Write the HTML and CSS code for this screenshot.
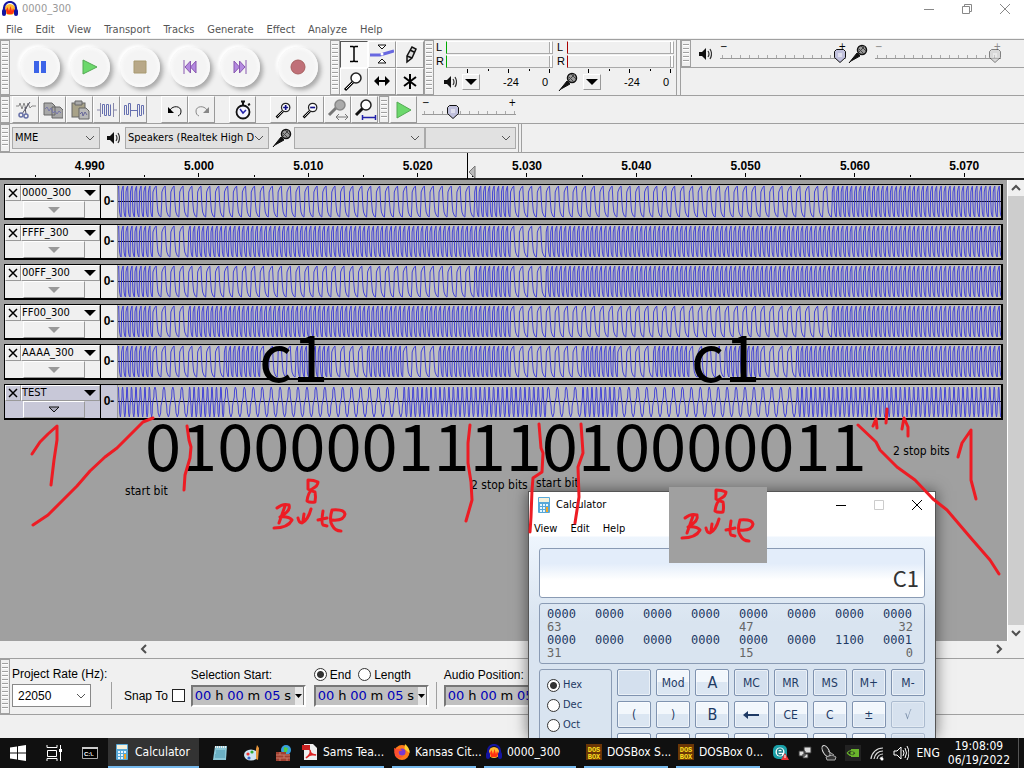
FILE: index.html
```html
<!DOCTYPE html>
<html lang="en">
<head>
<meta charset="utf-8">
<title>0000_300</title>
<link rel="stylesheet" href="styles.css">
</head>
<body>
<svg class="defs" width="0" height="0" aria-hidden="true">
  <symbol id="audacity" viewBox="0 0 16 16"><circle cx="8" cy="8.500" r="5.500" fill="#fb3"/><path d="M4 9l1.500-3 1.500 4 1.500-5 1.500 5 1-3 1.500 3-2 3H5z" fill="#f31"/><path d="M2 10V7a6 6 0 0112 0v3" fill="none" stroke="#1414a0" stroke-width="2.200"/><rect y="8" width="4" height="7" rx="2" fill="#1414a0"/><rect x="12" y="8" width="4" height="7" rx="2" fill="#1414a0"/></symbol>
  <symbol id="speaker" viewBox="0 0 14 14"><path d="M1 5h3l4-4v12L4 9H1z" fill="#111"/><path d="M10 4q2 3 0 6M12 2q3 5 0 10" fill="none" stroke="#333" stroke-width="1.200"/></symbol>
  <symbol id="mic" viewBox="0 0 20 20"><path d="M1 19L9 9l3 3L3 17z" fill="#111" stroke="#111"/><circle cx="14" cy="6" r="4.500" fill="#999" stroke="#111" stroke-width="1.500"/><path d="M11 5l5 5M13 2l5 5M11 8l6-6" stroke="#444"/></symbol>
  <symbol id="lens" viewBox="0 0 24 24"><path d="M3 21l8-8" stroke="#000" stroke-width="3"/><path d="M4 20l7-7" stroke="#eee"/><circle cx="14" cy="9" r="5" fill="#fff" stroke="#222" stroke-width="1.500"/></symbol>
  <symbol id="calcicon" viewBox="0 0 16 16"><rect x="2" width="12" height="16" rx="1" fill="#58a8d8"/><rect x="3" y="1" width="10" height="4" fill="#f5f1dc"/><path d="M4 7h2v2H4zm3 0h2v2H7zm3 0h2v2h-2zM4 10h2v2H4zm3 0h2v2H7zM4 13h2v2H4zm3 0h2v2H7z" fill="#e6f6ff"/><path d="M10 10h2v5h-2z" fill="#f5a623"/></symbol>
  <symbol id="dosbox" viewBox="0 0 16 16"><rect width="16" height="16" fill="#6b3606"/><text x="8" y="7.500">DOS</text><text x="8" y="14.500">BOX</text></symbol>
</svg>

<header class="titlebar">
  <svg class="i16"><use href="#audacity"/></svg><span class="caption">0000_300</span>
  <div class="winbtns">
    <button aria-label="Minimize"><svg class="i12" viewBox="0 0 12 12"><path d="M1 6.500h10"/></svg></button>
    <button aria-label="Restore"><svg class="i12" viewBox="0 0 12 12"><path d="M1.500 3.500h7v7h-7zM3.500 3.500v-2h7v7h-2"/></svg></button>
    <button aria-label="Close"><svg class="i12" viewBox="0 0 12 12"><path d="M1 1l10 10M11 1L1 11"/></svg></button>
  </div>
</header>
<nav class="menubar">
  <button>File</button><button>Edit</button><button>View</button><button>Transport</button><button>Tracks</button><button>Generate</button><button>Effect</button><button>Analyze</button><button>Help</button>
</nav>

<section class="bar bar-main">
  <i class="grip"></i>
  <div class="transport">
    <button class="round" aria-label="Pause"><svg class="i16" viewBox="0 0 16 16"><path d="M2 2h5v12H2zm7 0h5v12H9z" fill="#3c64e8"/></svg></button>
    <button class="round" aria-label="Play"><svg class="i16" viewBox="0 0 16 16"><path d="M1 1l14 7-14 7z" fill="#6cd86c" stroke="#5a5"/></svg></button>
    <button class="round" aria-label="Stop"><svg class="i16" viewBox="0 0 16 16"><path d="M2 2h12v12H2z" fill="#b8a888" stroke="#a89a70"/></svg></button>
    <button class="round" aria-label="Skip to start"><svg class="i16" viewBox="0 0 16 16"><path d="M2 1v14M8.500 2L3 8l5.500 6zM14 2L8.500 8l5.500 6z" fill="#b48ae0" stroke="#8858b0"/></svg></button>
    <button class="round" aria-label="Skip to end"><svg class="i16" viewBox="0 0 16 16"><path d="M14 1v14M7.500 2L13 8l-5.500 6zM2 2l5.500 6L2 14z" fill="#b48ae0" stroke="#8858b0"/></svg></button>
    <button class="round rec" aria-label="Record"><svg class="i16" viewBox="0 0 16 16"><circle cx="8" cy="8" r="7" fill="#c07078" stroke="#a86060"/></svg></button>
  </div>
  <i class="grip"></i>
  <div class="tools">
    <button class="tile on" aria-label="Selection"><svg class="i24" viewBox="0 0 24 24"><path d="M8 4.500h3l1 1 1-1h3M12 5v14M8 19.500h3l1-1 1 1h3" fill="none" stroke="#000" stroke-width="1.500"/></svg></button>
    <button class="tile" aria-label="Envelope"><svg class="i24" viewBox="0 0 24 24"><path d="M0 13h10l7-2 7-2" fill="none" stroke="#6868e0" stroke-width="3"/><path d="M8 3h8l-4 4zM8 21h8l-4-4z" fill="#fff" stroke="#111"/><circle cx="12" cy="12" r="1.500" fill="#fff"/></svg></button>
    <button class="tile" aria-label="Draw"><svg class="i24" viewBox="0 0 24 24"><path d="M9 20v-6l5-9 4 2-4 9zM9 14l5 2M12 8l4 2" fill="#ddd" stroke="#111" stroke-width="1.500"/></svg></button>
    <button class="tile" aria-label="Zoom"><svg class="i24"><use href="#lens"/></svg></button>
    <button class="tile" aria-label="Time shift"><svg class="i24" viewBox="0 0 24 24"><path d="M6 12h12" stroke="#000" stroke-width="2"/><path d="M9 7v10l-5-5zM15 7v10l5-5z"/></svg></button>
    <button class="tile" aria-label="Multi-tool"><svg class="i24" viewBox="0 0 24 24"><path d="M12 5v15M6 8l12 9M18 8L6 17" stroke="#000" stroke-width="2"/></svg></button>
  </div>
  <i class="grip"></i>
  <div class="meters">
    <div class="meter">
      <div class="lr"><span>L</span><i class="lane green"></i><span>R</span><i class="lane green"></i></div>
      <div class="ticks"><i></i><i></i><i></i><i></i><i></i></div>
      <div class="scale"><svg class="i14"><use href="#speaker"/></svg><button class="drop" aria-label="Output meter"><svg class="i12" viewBox="0 0 12 12"><path d="M0 3h12L6 9z"/></svg></button><span>-24</span><span>0</span></div>
    </div>
    <div class="meter">
      <div class="lr"><span>L</span><i class="lane red"></i><span>R</span><i class="lane red"></i></div>
      <div class="ticks"><i></i><i></i><i></i><i></i><i></i></div>
      <div class="scale"><svg class="i20"><use href="#mic"/></svg><button class="drop" aria-label="Input meter"><svg class="i12" viewBox="0 0 12 12"><path d="M0 3h12L6 9z"/></svg></button><span>-24</span><span>0</span></div>
    </div>
  </div>
  <div class="mixer-col">
    <div class="mixer">
      <i class="grip"></i>
      <svg class="i14"><use href="#speaker"/></svg>
      <label class="sl wide"><span>−</span><span>+</span><input type="range" min="0" max="10" value="10" aria-label="Output volume"></label>
      <svg class="i20"><use href="#mic"/></svg>
      <label class="sl wide off"><span>−</span><span>+</span><input type="range" min="0" max="10" value="10" disabled aria-label="Input volume"></label>
    </div>
  </div>
</section>

<section class="bar bar-edit">
  <i class="grip"></i>
  <div class="group">
    <button class="tile" aria-label="Cut"><svg class="i20" viewBox="0 0 20 20"><path d="M0 6h3l1-3 2 6 2-6 2 6 2-6 2 5 2-2h4" fill="none" stroke="#888"/><path d="M14 2L6 14M9 7l1 7" stroke="#556"/><circle cx="5" cy="15" r="2" fill="none" stroke="#6670a8" stroke-width="1.500"/><circle cx="10" cy="16" r="2" fill="none" stroke="#6670a8" stroke-width="1.500"/></svg></button>
    <button class="tile" aria-label="Copy"><svg class="i20" viewBox="0 0 20 20"><path d="M1 3h8l3 3v9H1zM9 7h8l3 3v8H9z" fill="#a8a8a8" stroke="#666"/><path d="M2 9l2-2 2 4 2-3 2 5 2-2 2 3 2-3 2 2" fill="none" stroke="#77a"/></svg></button>
    <button class="tile" aria-label="Paste"><svg class="i20" viewBox="0 0 20 20"><rect x="2" y="3" width="13" height="14" fill="#a8a288" stroke="#666"/><path d="M5 1h7v4H5z" fill="#aaa" stroke="#666"/><path d="M9 8h7l3 3v8H9z" fill="#b8b8b8" stroke="#666"/><path d="M10 14l2-2 1 4 2-4 2 3" fill="none" stroke="#669"/></svg></button>
    <button class="tile" aria-label="Trim"><svg class="i20" viewBox="0 0 20 20"><path d="M0 10h4M16 10h4M3.500 3v14M16.500 3v14" stroke="#88a"/><path d="M5.500 14V4.500h2v11h2v-11h2v11h2v-11" fill="none" stroke="#6670b0"/></svg></button>
    <button class="tile" aria-label="Silence"><svg class="i20" viewBox="0 0 20 20"><path d="M.5 15V5.500h2v9h2v-11h2v13M7 10.500h7M13.500 17V4.500h2v11h2v-10h2v9" fill="none" stroke="#6670b0"/></svg></button>
  </div>
  <div class="group">
    <button class="tile" aria-label="Undo"><svg class="i20" viewBox="0 0 20 20"><path d="M5 10c3-5 11-4 11 1 0 3-1 4-3 5" fill="none" stroke="#111"/><path d="M3 7v6h6z"/></svg></button>
    <button class="tile" aria-label="Redo"><svg class="i20" viewBox="0 0 20 20"><path d="M15 10c-3-5-11-4-11 1 0 3 1 4 3 5" fill="none" stroke="#888"/><path d="M17 7v6h-6z" fill="#888"/></svg></button>
  </div>
  <div class="group">
    <button class="tile" aria-label="Sync lock"><svg class="i20" viewBox="0 0 20 20"><circle cx="10" cy="12" r="6.500" fill="#f4f4ff" stroke="#111" stroke-width="1.800"/><path d="M8 1.500h4M10 2v4M15 5l2-1" stroke="#111" stroke-width="2"/><path d="M7 9l3 4 3-3" fill="none" stroke="#22a" stroke-width="1.500"/></svg></button>
  </div>
  <div class="group">
    <button class="tile" aria-label="Zoom in"><svg class="i20" viewBox="0 0 24 24"><use href="#lens" width="24" height="24"/><path d="M11 9h6M14 6v6" stroke="#118" stroke-width="2"/></svg></button>
    <button class="tile" aria-label="Zoom out"><svg class="i20" viewBox="0 0 24 24"><use href="#lens" width="24" height="24"/><path d="M11 9h6" stroke="#118" stroke-width="2"/></svg></button>
    <button class="tile" aria-label="Fit selection"><svg class="i24" viewBox="0 0 24 24"><path d="M3 17l8-8" stroke="#777" stroke-width="3"/><circle cx="14" cy="7" r="5" fill="#aaa" stroke="#888" stroke-width="1.500"/><path d="M10 19h12M13 16l-3 3 3 3M19 16l3 3-3 3" fill="none" stroke="#777"/></svg></button>
    <button class="tile" aria-label="Fit project"><svg class="i24" viewBox="0 0 24 24"><path d="M3 17l8-8" stroke="#111" stroke-width="3"/><circle cx="13" cy="7" r="5" fill="#fff" stroke="#222" stroke-width="1.500"/><path d="M10 19.500h12M9.500 17v5M22.500 17v5" stroke="#22a" stroke-width="1.500"/></svg></button>
  </div>
  <i class="grip"></i>
  <button class="tile" aria-label="Play at speed"><svg class="i20" viewBox="0 0 20 20"><path d="M3 2l14 8-14 8z" fill="#6cd86c" stroke="#5a5"/></svg></button>
  <label class="sl"><span>−</span><span>+</span><input type="range" min="0" max="10" value="3" aria-label="Playback speed"></label>
</section>

<section class="bar bar-device">
  <i class="grip"></i>
  <select class="host" aria-label="Audio host"><option>MME</option></select>
  <svg class="i14"><use href="#speaker"/></svg>
  <select class="out" aria-label="Output device"><option>Speakers (Realtek High D</option></select>
  <svg class="i20"><use href="#mic"/></svg>
  <div class="pair"><select class="in" aria-label="Input device"><option></option></select><select class="chan" aria-label="Input channels"><option></option></select></div>
  <i class="endline"></i>
</section>

<div class="ruler">
  <span>4.990</span><span>5.000</span><span>5.010</span><span>5.020</span><span>5.030</span><span>5.040</span><span>5.050</span><span>5.060</span><span>5.070</span>
  <svg class="playhead" viewBox="0 0 10 28"><path d="M.5 0v26" stroke="#000"/><path d="M8 13v12l-6-6z" fill="#bbb" stroke="#777"/></svg>
</div>

<main class="work">
  <div class="tracks" id="tracks"></div>
  <div class="vscroll"><button aria-label="Scroll up"><svg class="i12" viewBox="0 0 12 12"><path d="M2 8l4-4 4 4"/></svg></button><i></i><button aria-label="Scroll down"><svg class="i12" viewBox="0 0 12 12"><path d="M2 4l4 4 4-4"/></svg></button></div>
</main>
<div class="hscroll"><button aria-label="Scroll left"><svg class="i12" viewBox="0 0 12 12"><path d="M8 2L4 6l4 4"/></svg></button><button aria-label="Scroll right"><svg class="i12" viewBox="0 0 12 12"><path d="M4 2l4 4-4 4"/></svg></button></div>

<section class="selection">
  <i class="grip"></i>
  <div class="col"><label for="rate">Project Rate (Hz):</label><select id="rate"><option>22050</option></select></div>
  <i class="sep"></i>
  <label class="snap">Snap To <input type="checkbox"></label>
  <div class="col"><span>Selection Start:</span><div class="time"><b>00</b>h<b>00</b>m<b>05</b>s<button aria-label="Start format"><svg viewBox="0 0 7 4"><path d="M0 0h7L3.500 4z"/></svg></button></div></div>
  <div class="col"><div class="radios"><label><input type="radio" name="len" checked>End</label><label><input type="radio" name="len">Length</label></div><div class="time"><b>00</b>h<b>00</b>m<b>05</b>s<button aria-label="End format"><svg viewBox="0 0 7 4"><path d="M0 0h7L3.500 4z"/></svg></button></div></div>
  <i class="sep near"></i>
  <div class="col"><span>Audio Position:</span><div class="time"><b>00</b>h<b>00</b>m<b>05</b>s<button aria-label="Position format"><svg viewBox="0 0 7 4"><path d="M0 0h7L3.500 4z"/></svg></button></div></div>
</section>
<div class="status"></div>

<footer class="taskbar">
  <button class="sys" aria-label="Start"><svg class="i16" viewBox="0 0 16 16"><path d="M0 2.500l7-1v6H0zM8 1.300L16 0v7.500H8zM0 8.500h7v6l-7-1zM8 8.500h8V16l-8-1.300z" fill="#fff"/></svg></button>
  <button class="sys" aria-label="Task View"><svg class="i16" viewBox="0 0 16 16"><path d="M1 0v2.500h10V0M1.500 5.500h9v6h-9zM1 16v-2.500h10V16M14.500 0v16" fill="none" stroke="#fff"/><path d="M13 4h3v3h-3z" fill="#fff"/></svg></button>
  <button class="sys" aria-label="Command Prompt"><svg class="i16" viewBox="0 0 16 16"><path d="M.5 2.500h15v11H.5z" fill="#000" stroke="#aaa"/><path d="M0 2h16v2H0z" fill="#ccc"/><text class="cmd" x="2" y="11">C:\.</text></svg></button>
  <button class="app active"><svg class="i16"><use href="#calcicon"/></svg><span>Calculator</span></button>
  <button class="sys" aria-label="Notepad"><svg class="i16" viewBox="0 0 16 16"><path d="M3 1h12l-1 14H1z" fill="#8cc8d8"/><path d="M3 2h12" stroke="#eee" stroke-width="2" stroke-dasharray="1 1"/><path d="M4 6h9M4 8h9M3 10h10M3 12h10" stroke="#4a98b0"/></svg></button>
  <button class="sys" aria-label="Paint"><svg class="i16" viewBox="0 0 16 16"><ellipse cx="7" cy="10" rx="7" ry="5.500" fill="#cde4f4"/><circle cx="4" cy="9" r="1.600" fill="#e33"/><circle cx="8" cy="7" r="1.600" fill="#3a3"/><circle cx="5" cy="13" r="1.600" fill="#36c"/><path d="M13 0l2 3-1 12-2-1V4z" fill="#e8963c"/></svg></button>
  <button class="sys" aria-label="Firewall"><svg class="i16" viewBox="0 0 16 16"><circle cx="10" cy="5" r="5" fill="#38a0e0"/><path d="M8 2l4 1-1 4-3 1z" fill="#5c4"/><path d="M0 7h10v2h4v7H0z" fill="#a04030"/><path d="M0 10h14M0 13h14M4 7v3M8 10v3M4 13v3M11 13v3" stroke="#c87868"/></svg></button>
  <button class="app run"><svg class="i16" viewBox="0 0 16 16"><path d="M2 0h9l4 4v12H2z" fill="#eee"/><path d="M0 1h8v5H0z" fill="#c22"/><path d="M4 14c4-3 5-6 4-8 0 4 3 5 6 5-3-1-7 0-10 3z" fill="none" stroke="#d22" stroke-width="1.500"/></svg><span>Sams Tea...</span></button>
  <button class="app run"><svg class="i16" viewBox="0 0 16 16"><circle cx="8" cy="8.500" r="7.500" fill="#ff7a18"/><path d="M11 0q5 4 4.500 9l-5-4z" fill="#ffd030"/><circle cx="8" cy="8" r="3.500" fill="#7a3ad0"/><path d="M0 4l3 1q4-1 5 2-3-1-4 2 1 4 6 3-5 4-9 0z" fill="#ff4f30"/></svg><span>Kansas Cit...</span></button>
  <button class="app run long"><svg class="i16"><use href="#audacity"/></svg><span>0000_300</span></button>
  <button class="app run"><svg class="i16 dos"><use href="#dosbox"/></svg><span>DOSBox S...</span></button>
  <button class="app run"><svg class="i16 dos"><use href="#dosbox"/></svg><span>DOSBox 0...</span></button>
  <div class="tray">
    <svg class="i16" viewBox="0 0 16 16"><rect width="14" height="14" rx="5" fill="#19a0a8"/><circle cx="7" cy="7" r="4.500" fill="#fff"/><path d="M4.500 7h5q0-3-2.500-3T4.500 7t2.500 3l2-.500" fill="none" stroke="#19808a" stroke-width="1.300"/><path d="M12 8l4 7H8z" fill="#e33"/><path d="M12 10v3" stroke="#fff"/></svg>
    <svg class="i16" viewBox="0 0 16 16"><path d="M7 2h7v6H7zM2 6h6v5H2zM6 9h5v4H6z" fill="#ddd" stroke="#333"/></svg>
    <svg class="i16" viewBox="0 0 16 16"><ellipse cx="5" cy="6" rx="3" ry="6" transform="rotate(-30 5 6)" fill="#222" stroke="#ddd"/><path d="M5 12l6-2 4 2-1 3H6zM7 6l6 4" fill="#333" stroke="#aaa"/></svg>
    <svg class="i16" viewBox="0 0 16 16"><path d="M0 0h16v16H0z" fill="#222"/><path d="M6 4h8v8H6z" fill="#6ab52c"/><path d="M2 8q4-5 9 0-4 5-9 0" fill="#222" stroke="#6ab52c" stroke-width="1.200"/><circle cx="7" cy="8" r="1.700" fill="#6ab52c"/></svg>
    <svg class="i16 wifi" viewBox="0 0 16 16"><path d="M2 14A12 12 0 0114 3M5 14a9 9 0 019-8M8 14a6 6 0 016-5M11 14a3 3 0 013-2" fill="none" stroke="#ddd" stroke-width="1.200"/><circle cx="13" cy="14" r="1.500" fill="#fff"/></svg>
    <svg class="i16" viewBox="0 0 16 16"><path d="M1 6h3l4-4v12l-4-4H1zM10 5q2 3 0 6M12 3q3 5 0 10M14 1q4 7 0 14" fill="none" stroke="#fff"/></svg>
    <span class="lang">ENG</span>
    <div class="clock"><span>19:08:09</span><span>06/19/2022</span></div>
    <i class="peek"></i>
  </div>
</footer>

<section class="calc" aria-label="Calculator">
  <header><svg class="i16"><use href="#calcicon"/></svg><span>Calculator</span>
    <div class="winbtns dark">
      <button aria-label="Minimize calculator"><svg class="i12" viewBox="0 0 12 12"><path d="M1 6.500h10"/></svg></button>
      <button aria-label="Maximize calculator" disabled><svg class="i12" viewBox="0 0 12 12"><path d="M1.500 1.500h9v9h-9z"/></svg></button>
      <button aria-label="Close calculator"><svg class="i12" viewBox="0 0 12 12"><path d="M1 1l10 10M11 1L1 11"/></svg></button>
    </div>
  </header>
  <nav><button>View</button><button>Edit</button><button>Help</button></nav>
  <div class="calc-body">
    <output class="display">C1</output>
    <div class="bits">
      <span>0000</span><span>0000</span><span>0000</span><span>0000</span><span>0000</span><span>0000</span><span>0000</span><span>0000</span>
      <small>63</small><small></small><small></small><small></small><small>47</small><small></small><small></small><small class="r">32</small>
      <span>0000</span><span>0000</span><span>0000</span><span>0000</span><span>0000</span><span>0000</span><span>1100</span><span>0001</span>
      <small>31</small><small></small><small></small><small></small><small>15</small><small></small><small></small><small class="r">0</small>
    </div>
    <div class="pad">
      <div class="base"><label><input type="radio" name="base" checked>Hex</label><label><input type="radio" name="base">Dec</label><label><input type="radio" name="base">Oct</label></div>
      <div class="keys">
        <button class="flat" aria-label="Blank"></button><button>Mod</button><button class="hex">A</button><button class="flat">MC</button><button class="flat">MR</button><button class="flat">MS</button><button class="flat">M+</button><button class="flat">M-</button>
        <button>(</button><button>)</button><button class="hex">B</button><button aria-label="Backspace"><svg class="i16" viewBox="0 0 16 16"><path d="M2 8h14" stroke="#1e3a64" stroke-width="2"/><path d="M0 8l5-4v8z" fill="#1e3a64"/></svg></button><button>CE</button><button>C</button><button>±</button><button class="flat" disabled>√</button>
        <button aria-label="RoL"></button><button aria-label="RoR"></button><button aria-label="C digit"></button><button aria-label="7"></button><button aria-label="8"></button><button aria-label="9"></button><button aria-label="Divide"></button><button class="flat" disabled aria-label="Percent"></button>
      </div>
    </div>
  </div>
</section>

<svg class="notes" viewBox="0 0 1024 768">
  <path d="M669 487h98v76h-98z" fill="#a0a0a0"/>
  <text class="big" x="259" y="382">c1</text>
  <text class="big" x="691" y="382">c1</text>
  <text class="big" x="145" y="471">01000001111010000011</text>
  <text x="125" y="495">start bit</text>
  <text x="471" y="489">2 stop bits</text>
  <text x="536" y="487">start bit</text>
  <text x="893" y="455">2 stop bits</text>
  <g class="ink">
    <path d="M32 454l8-12 8-8 9-8v14l-3 20-3 25"/>
    <path d="M153 418l-10 4-13 13-13 13-12 9-15 14-13 15-15 15-14 14-15 10"/>
    <path d="M187 426l2 14 2 7-1 11-5 17-1 15"/>
    <path d="M470 425l-2 18v20l3 19 1 18-6 21"/>
    <path d="M539 424l2 24 2 5-1 19-9 6-1 12-1 27-1 15"/>
    <path d="M581 424l2 29-5 14 1 30-4 26"/>
    <path d="M858 425l18 17 4 8 17 17 18 13 18 19 14 11 23 27 20 23 9 14"/>
    <path d="M873 426l3-7 1 9M887 409l-1 14M902 429l2-11 4 9v9"/>
    <path d="M958 457l4-14 9-13v50l5 19"/>
    <g id="byte">
      <path d="M308 480q6 0 10 2 0 4-6 7-4 4-5 12 3 2 8 1 1-5 0-10-4-1-7-3v-9"/>
      <path d="M285 506l-6 17M277 508q6-5 12-3 2 6-9 12 9-1 12 3-4 8-18 8"/>
      <path d="M298 518q1 5 4 5 6-3 9-14M304 514l-1 7"/>
      <path d="M323 511q-2 12 0 14l4 1M318 520l9-2"/>
      <path d="M332 520q12 1 13-6-1-5-13-4-3 10 0 15 3 6 9 6"/>
    </g>
    <use href="#byte" x="408" y="10"/>
  </g>
</svg>
<script src="tracks.js"></script>
</body>
</html>
```
FILE: styles.css
```css
* { box-sizing: border-box; }
html, body { margin: 0; height: 100%; }
body { display: flex; flex-direction: column; min-height: 100vh; position: relative; overflow: hidden; background: #f0f0f0; color: #000; font: 11px/14px "DejaVu Sans Condensed", "DejaVu Sans", sans-serif; }
button, select, input { font: inherit; color: inherit; margin: 0; padding: 0; }
button { border: 0; background: none; display: inline-flex; align-items: center; justify-content: center; }
svg { display: block; flex: none; }
.defs { position: absolute; }
.i12 { width: 12px; height: 12px; }
.i14 { width: 14px; height: 14px; }
.i16 { width: 16px; height: 16px; }
.i20 { width: 20px; height: 20px; }
.i24 { width: 24px; height: 24px; }

.titlebar { display: flex; align-items: center; height: 18px; padding-left: 2px; gap: 4px; background: #fff; color: #999; font-size: 11px; }
.winbtns { display: flex; gap: 26px; margin-left: auto; padding-right: 13px; }
.winbtns path { fill: none; stroke: #888; }
.dark path { stroke: #000; }
.dark :disabled path { stroke: #ccc; }
.menubar { display: flex; gap: 13px; height: 20px; padding: 4px 6px 0; background: #fff; color: #555; }

.bar { display: flex; align-items: center; border-top: 1px solid #a0a0a0; }
.grip { align-self: stretch; width: 10px; border: 3px solid #f0f0f0; border-width: 4px 2px; outline: 1px solid #a0a0a0; outline-offset: -1px; background: repeating-linear-gradient(#a0a0a0 0 1px, #fff 1px 2px, #f0f0f0 2px 4px); flex: none; }
.bar-main { height: 56px; margin-top: 1px; }
.transport { display: flex; gap: 10px; width: 320px; padding: 0 0 2px 10px; }
.round { width: 40px; height: 40px; border-radius: 50%; background: radial-gradient(#f4f4f4 55%, #fff 85%, #eee); box-shadow: 3px 3px 4px #aaa, -2px -2px 3px #fff; }
.rec { margin-left: 8px; }
.tools { display: grid; grid-template-columns: repeat(3, 28px); grid-template-rows: repeat(2, 27px); }
.tile { border: 1px solid; border-color: #fff #999 #999 #fff; height: 27px; min-width: 27px; overflow: hidden; }
.on { border-color: #555 #fff #fff #555; background: #f8f8f8; }
.meters { display: flex; width: 243px; height: 55px; padding: 0 2px; gap: 4px; border-right: 1px solid #a0a0a0; }
.meter { flex: 1; display: flex; flex-direction: column; min-width: 0; }
.lr { display: grid; grid-template-columns: 10px 1fr; align-items: center; font-family: "Liberation Sans", sans-serif; }
.lane { height: 13px; border: 1px solid #aaa; border-left: 1px solid; border-top-color: #fff; box-shadow: inset -2px 0 #fff, inset -3px 0 #aaa; }
.green { border-left-color: #0a0; }
.red { border-left-color: #a00; }
.ticks { display: flex; justify-content: space-between; margin: 1px 3px 0 31px; height: 4px; }
.ticks i { width: 1px; height: 2px; background: #000; }
.ticks i:nth-child(odd) { height: 4px; }
.scale { display: flex; align-items: center; height: 17px; font-family: "Liberation Sans", sans-serif; padding: 0 5px 0 7px; }
.scale .i20 { margin-left: -6px; }
.scale span { margin-left: auto; }
.drop { width: 18px; height: 16px; margin-left: 5px; border: 1px solid; border-color: #fff #999 #999 #fff; flex: none; }
.mixer-col { flex: 1; align-self: stretch; margin-left: 3px; border-left: 1px solid #a0a0a0; }
.mixer { display: flex; align-items: center; height: 28px; border-bottom: 1px solid #a0a0a0; }
.mixer .grip { margin-right: 7px; }
.sl { display: grid; grid-template-columns: 1fr auto; width: 94px; margin-left: 5px; line-height: 6px; font-size: 10px; padding-bottom: 2px; }
.sl input { grid-column: 1 / 3; appearance: none; width: 100%; height: 12px; background: repeating-linear-gradient(90deg, #aaa 0 1px, transparent 1px 9px) 2px 5px / 100% 3px no-repeat, linear-gradient(#999, #999) 0 8px / 100% 1px no-repeat; }
.wide { width: 126px; margin-left: 8px; }
.wide + .i20 { margin-left: 2px; }
.i20 + .wide { margin-left: 7px; }
.off { color: #888; }
input[type=range]::-webkit-slider-thumb { appearance: none; width: 12px; height: 14px; background: url("data:image/svg+xml,%3Csvg xmlns='http://www.w3.org/2000/svg' width='12' height='14'%3E%3Cpath d='M2.500 .5h7l2 2v6l-5.500 5-5.500-5v-6z' fill='%23c0c0dc' stroke='%23111'/%3E%3Cpath d='M4 5h4M4 7h4' stroke='%23fff'/%3E%3C/svg%3E"); }
.off input::-webkit-slider-thumb { filter: grayscale(1) opacity(.5); }

.bar-edit { height: 28px; }
.group { display: flex; margin-right: 12px; padding-left: 2px; }
.group + .grip { margin-left: -11px; margin-right: 1px; }
.bar-device { height: 29px; }
select { appearance: none; height: 22px; border: 1px solid #aaa; border-radius: 0; background: #e1e1e1 url("data:image/svg+xml,%3Csvg xmlns='http://www.w3.org/2000/svg' width='10' height='6'%3E%3Cpath d='M1 1l4 4 4-4' fill='none' stroke='%23555'/%3E%3C/svg%3E") right 4px center no-repeat; padding: 0 14px 0 2px; }
.host { width: 88px; margin: 0 6px 0 2px; }
.out { width: 144px; margin: 0 3px 0 5px; }
.pair { display: flex; margin-left: 2px; }
.in { width: 131px; }
.chan { width: 91px; }
.endline { align-self: stretch; width: 4px; margin-left: 2px; border: 1px solid #a0a0a0; border-width: 0 1px; }

.ruler { position: relative; display: flex; height: 28px; padding: 0 5px 0 35px; border-top: 1px solid #a0a0a0; border-bottom: 2px solid #222; font: bold 12px/26px "Liberation Sans", sans-serif; text-align: center; }
.ruler span { flex: 1; background: linear-gradient(#000, #000) center bottom 1px / 1px 4px no-repeat, linear-gradient(#000, #000) left bottom 1px / 1px 2px no-repeat; }
.playhead { position: absolute; left: 467px; top: 0; width: 10px; height: 28px; }

.work { flex: 1; display: flex; min-height: 0; background: #a0a0a0; }
.tracks { flex: 1; display: flex; flex-direction: column; gap: 4px; padding: 4px 4px 0; min-width: 0; }
.track { display: flex; height: 36px; border: 1px solid #000; border-right-width: 2px; border-bottom-width: 2px; background: #f0f0f0; flex: none; }
.selected { background: #c8c8d8; }
.head { width: 96px; display: grid; grid-template: 16px 1fr / 16px 1fr; border-right: 1px solid #000; }
.head button { border: 1px solid; border-color: #fff #999 #999 #fff; min-width: 0; }
.head .name { justify-content: space-between; padding: 0 3px 0 0; }
.head .fold { grid-column: 1 / 3; width: 62px; justify-self: start; margin-left: 18px; }
.zero { width: 17px; border-right: 1px solid #999; font: bold 12px/33px "Liberation Sans", sans-serif; text-align: center; }
.wave { flex: 1; min-width: 0; height: 33px; background: #c0c0c0; }
.wave path { fill: none; stroke: #4444d6; stroke-width: 1; }
.wave .mid { stroke: #000; }

.vscroll { width: 17px; display: flex; flex-direction: column; background: #f0f0f0; border-left: 1px solid #fff; }
.vscroll i { flex: 1; background: #cdcdcd; }
.vscroll button, .hscroll button { height: 16px; }
.vscroll path, .hscroll path { fill: none; stroke: #505050; stroke-width: 2; }
.hscroll { display: flex; justify-content: space-between; height: 17px; padding: 0 19px 0 138px; }

.selection { display: flex; align-items: center; height: 57px; border: 1px solid #a0a0a0; border-width: 1px 0; font: 12px/16px "Liberation Sans", sans-serif; white-space: nowrap; }
.col { display: flex; flex-direction: column; gap: 2px; width: 115px; margin-right: 8px; }
.selection .grip + .col { width: 98px; margin: 0 1px 0 2px; }
#rate { width: 79px; height: 23px; background-color: #fff; border-color: #888; padding-left: 5px; }
.sep { width: 1px; height: 27px; background: #a0a0a0; margin: 18px 12px 0 0; }
.near { margin: 18px 7px 0 -1px; }
.snap { display: flex; align-items: center; gap: 4px; margin: 18px 6px 0 0; }
.snap input { appearance: none; width: 13px; height: 13px; border: 1px solid #222; background: #fff; }
.radios { display: flex; gap: 7px; }
.radios label, .base label { display: flex; align-items: center; gap: 3px; }
input[type=radio] { appearance: none; width: 13px; height: 13px; border: 1px solid #333; border-radius: 50%; background: #fff; }
input[type=radio]:checked { background: radial-gradient(#333 0 3px, #fff 4px); }
.time { display: flex; align-items: center; justify-content: space-between; width: 115px; height: 22px; padding-left: 2px; background: #c0c0c0; border: 2px solid; border-color: #777 #fff #fff #777; font: 13px/16px "DejaVu Sans", sans-serif; }
.time b { font-weight: normal; color: #0000b8; }
.time button { width: 9px; height: 18px; background: #e8e8e8; border-right: 1px solid #777; }
.time svg { width: 7px; height: 4px; }
.status { height: 23px; }

.taskbar { position: relative; z-index: 2; display: flex; height: 30px; background: #101010; color: #fff; font-size: 12px; }
.sys { width: 32px; height: 30px; flex: none; }
.sys:nth-child(-n+3) { width: 36px; }
.app { display: flex; justify-content: flex-start; gap: 5px; width: 84px; margin-right: 8px; padding-left: 2px; border-bottom: 2px solid #76b9ed; white-space: nowrap; flex: none; }
.active { width: 91px; background: #333; padding-left: 6px; margin-right: 5px; }
.long { width: 92px; }
.tray { display: flex; align-items: center; gap: 8px; margin-left: auto; }
.clock { display: flex; flex-direction: column; align-items: center; line-height: 14px; }
.peek { height: 30px; width: 6px; border-left: 1px solid #555; }
#dosbox text { font: bold 7px/7px "Liberation Mono", monospace; text-anchor: middle; fill: #ffe020; }
.cmd { font: bold 6px/6px "Liberation Sans", sans-serif; fill: #fff; }

.calc { position: absolute; z-index: 1; left: 528px; top: 491px; width: 408px; height: 247px; overflow: hidden; border: 1px solid #555; border-bottom: 0; background: linear-gradient(#fff 44px, #eef5fd 45px, #d9e4f0 130px); box-shadow: 0 0 14px #0008; }
.calc header { display: flex; align-items: center; height: 25px; padding-left: 7px; gap: 4px; }
.calc header .winbtns { padding-right: 12px; }
.calc nav { display: flex; gap: 13px; height: 20px; padding: 4px 5px 0; }
.calc-body { padding: 11px 10px 0; display: flex; flex-direction: column; gap: 5px; color: #1e3a64; }
.display { height: 50px; padding: 17px 5px 0; border: 1px solid #8a9bb4; border-radius: 3px; background: linear-gradient(#e3edfa 30%, #fff 65%); text-align: right; font: 22px/22px "Noto Sans CJK SC", sans-serif; color: #333; }
.bits { display: grid; grid-template-columns: repeat(7, 48px) 30px; justify-content: start; height: 61px; padding: 4px 7px; border: 1px solid #8a9bb4; border-radius: 3px; font: 12px/13px "DejaVu Sans Mono", monospace; }
.bits small { font-size: 12px; color: #666; }
.bits .r { text-align: right; }
.pad { display: grid; grid-template-columns: 73px 1fr; gap: 5px; }
.base { display: flex; flex-direction: column; gap: 6px; height: 100px; padding: 8px 7px; border: 1px solid #8a9bb4; border-radius: 3px; }
.keys { display: grid; grid-template-columns: repeat(8, 1fr); gap: 5px; align-content: start; }
.keys button { height: 27px; border: 1px solid #7f93b0; border-radius: 2px; background: linear-gradient(#f2f7fc 50%, #dbe6f2 50%); box-shadow: inset 0 0 0 1px #fff8; font-size: 12px; }
.keys .hex { font-size: 16px; }
.keys .flat { background: #d4e0ee; }
.keys :disabled { opacity: .5; }

.notes { position: absolute; z-index: 3; left: 0; top: 0; width: 1024px; height: 768px; pointer-events: none; }
.notes text { font: 12px "DejaVu Sans Condensed", sans-serif; }
.notes .big { font: 65px "Noto Sans CJK SC", sans-serif; }
.ink { fill: none; stroke: #ed1c24; stroke-width: 3; stroke-linecap: round; stroke-linejoin: round; }
```
FILE: tracks.js
```js
// Each string holds one character per 300-baud bit: a 0 is four slow cycles, a 1 is eight fast ones.
const tracks = [
  ["0000_300", "1" + "0".repeat(9) + "1" + "0".repeat(9) + "11111"],
  ["FFFF_300", "10" + "1".repeat(9) + "0" + "1".repeat(13)],
  ["00FF_300", "1" + "0".repeat(9) + "10" + "1".repeat(13)],
  ["FF00_300", "10" + "1".repeat(9) + "0".repeat(9) + "11111"],
  ["AAAA_300", "1001010101100101010111111"],
  ["TEST", "1010000011110100000111111"]
];
const BIT = 35.8, FIRST = -1;

function wave(bits, symmetric) {
  let d = "M0 17";
  [...bits].forEach((b, i) => {
    const n = b === "1" ? 8 : 4, w = BIT / n;
    for (let k = 0; k < n; k++) {
      const x = FIRST + i * BIT + k * w;
      const pts = symmetric
        ? [[0, 17], [.12, 12], [.15, 5], [.25, 2], [.35, 5], [.4, 12], [.55, 21], [.6, 28], [.75, 32], [.88, 28], [.92, 21]]
        : [[0, 17], [.02, 7], [.2, 3], [.38, 1], [.45, 12], [.5, 20], [.58, 27], [.75, 31], [.92, 32], [.98, 21]];
      for (const [fx, y] of pts) d += "L" + (x + fx * w).toFixed(1) + " " + y;
    }
  });
  return d;
}

document.getElementById("tracks").innerHTML = tracks.map(([name, bits]) => {
  const sel = name === "TEST";
  const arrow = sel
    ? '<path d="M1 1h10L6 6z" fill="#aab" stroke="#111"/>'
    : '<path d="M0 1h12L6 7z" fill="#999"/>';
  return `<div class="track${sel ? " selected" : ""}">
    <div class="head"><button aria-label="Close ${name}"><svg width="10" height="10" viewBox="0 0 10 10"><path d="M1 1l8 8M9 1L1 9" stroke="#000" stroke-width="1.500"/></svg></button>
    <button class="name">${name}<svg width="12" height="7" viewBox="0 0 12 7"><path d="M0 0h12L6 6z"/></svg></button>
    <button class="fold" aria-label="Expand ${name}"><svg width="12" height="8" viewBox="0 0 12 8">${arrow}</svg></button></div>
    <div class="zero">0-</div>
    <svg class="wave" viewBox="0 0 884 33" preserveAspectRatio="none"><path class="mid" d="M0 16.500h884"/><path d="${wave(bits, sel)}"/></svg>
  </div>`;
}).join("");
```
